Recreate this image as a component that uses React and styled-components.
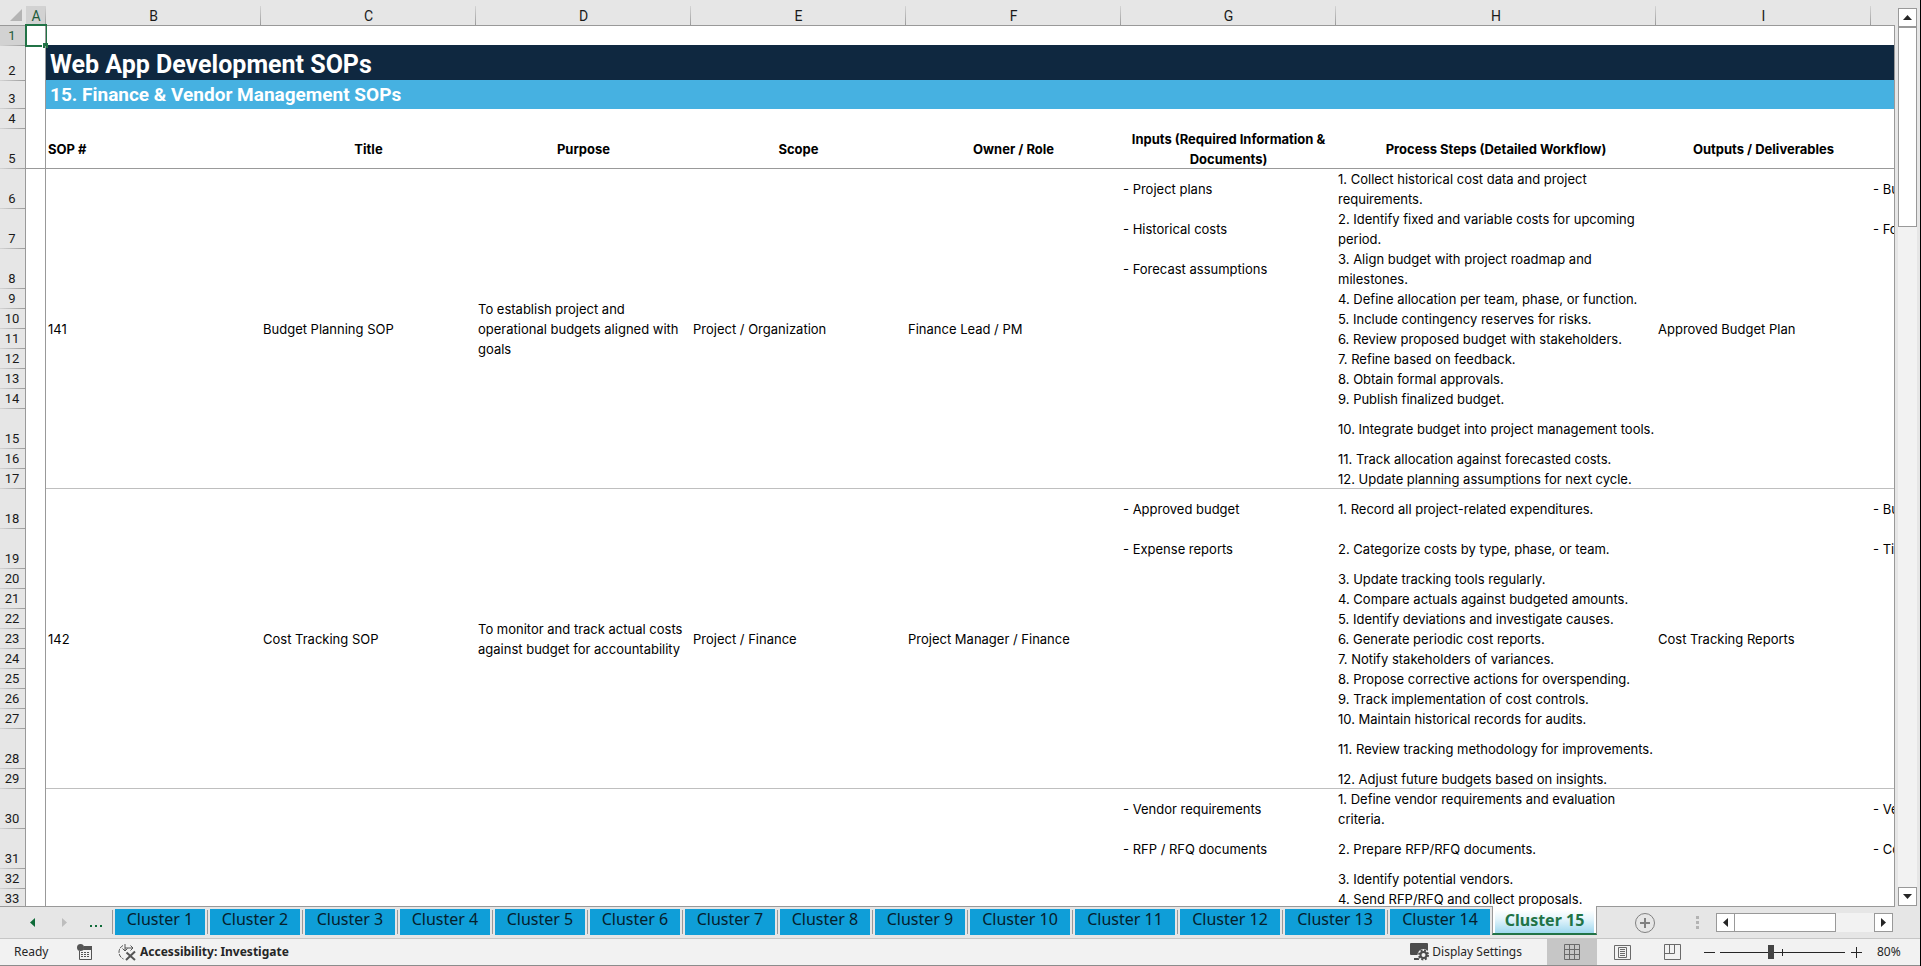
import React from "react";
import styled, { createGlobalStyle, css } from "styled-components";

const color = {
  chrome: "#e6e6e6",
  chromeActive: "#d2d2d2",
  line: "#999999",
  softLine: "#bfbfbf",
  green: "#217346",
  navy: "#0f2840",
  sky: "#46b1e1",
  tab: "#0f9ed8",
};

const GlobalStyle = createGlobalStyle`
  *, *::before, *::after { box-sizing: border-box; }
  body { margin: 0; }
  button { font: inherit; color: inherit; border: 0; padding: 0; background: none; cursor: pointer; }
  svg { display: block; }
`;

const Window = styled.div`
  display: flex;
  flex-direction: column;
  height: 100vh;
  overflow: hidden;
  background: ${color.chrome};
  border-right: 1px solid #000;
  font-family: "Noto Sans", sans-serif;
  color: #262626;
`;

/* ---------- worksheet ---------- */

const Workspace = styled.main`
  flex: 1;
  display: flex;
  min-height: 0;
`;

const Viewport = styled.div`
  flex: 1;
  min-width: 0;
  overflow: hidden;
  background: #fff;
  border-bottom: 1px solid ${color.line};
`;

const Sheet = styled.table`
  table-layout: fixed;
  width: 2086px;
  border-spacing: 0;
  font: 13px/20px Inter, "Liberation Sans", sans-serif;
  color: #000;

  th, td { padding: 0 2px; }
`;

const Col = styled.col`
  width: ${(p) => p.$w}px;
`;

const Corner = styled.td`
  height: 26px;
  background: ${color.chrome};
  box-shadow: inset 0 -1px ${color.line};

  svg { margin: 4px 0 0 8px; }
`;

const ColumnHead = styled.th`
  height: 26px;
  font: 14px/20px Roboto, sans-serif;
  vertical-align: bottom;
  color: ${(p) => (p.$active ? "#1e5c3a" : "#1a1a1a")};
  background:
    linear-gradient(${color.line}, ${color.line}) 0 100% / 100% 1px no-repeat,
    linear-gradient(#d4d4d4, ${color.line}) 100% 100% / 1px 20px no-repeat,
    linear-gradient(
      ${(p) => (p.$active ? color.chromeActive : color.chrome)},
      ${(p) => (p.$active ? color.chromeActive : color.chrome)}
    ) 0 100% / 100% 20px no-repeat,
    ${color.chrome};
`;

const RowHead = styled.th`
  && { padding: 0 4px 0 2px; }
  height: ${(p) => p.$h}px;
  font: 13px/20px Roboto, sans-serif;
  vertical-align: bottom;
  color: ${(p) => (p.$active ? "#1e5c3a" : "#1a1a1a")};
  background:
    linear-gradient(${color.line}, ${color.line}) 100% 0 / 1px 100% no-repeat,
    linear-gradient(90deg, #d4d4d4, ${color.line}) 0 100% / 100% 1px no-repeat,
    ${(p) => (p.$active ? color.chromeActive : color.chrome)};
`;

const lineBelow = {
  frozen: css`box-shadow: inset 0 -1px ${color.line};`,
  group: css`box-shadow: inset 0 -1px ${color.softLine};`,
};

const Gutter = styled.td`
  position: relative;
  background:
    linear-gradient(${color.line}, ${color.line}) 100% 0 / 1px 100% no-repeat;
  ${(p) => lineBelow[p.$line]}
`;

const Cell = styled.td`
  vertical-align: middle;
  white-space: pre;
  ${(p) => lineBelow[p.$line]}
`;

const FieldHead = styled.th`
  font-weight: 700;
  vertical-align: middle;
  white-space: pre;
  text-align: ${(p) => p.$align || "center"};
  ${lineBelow.frozen}
`;

const Banner = styled.td`
  && { padding: ${(p) => p.$drop || 0}px 4px 0; }
  font-family: Roboto, sans-serif;
  font-weight: 700;
  font-size: ${(p) => p.$size}px;
  line-height: 28px;
  color: #fff;
  background: ${(p) => p.$fill};
  box-shadow: 0 -1px ${(p) => p.$fill};
`;

const Selection = styled.div`
  position: absolute;
  top: -2px;
  left: -1px;
  width: 22px;
  height: 23px;
  border: 2px solid ${color.green};
  border-right-width: 1px;

  &::after {
    content: "";
    position: absolute;
    right: -2px;
    bottom: -3px;
    width: 5px;
    height: 5px;
    background: ${color.green};
    box-shadow: -1px 0 #fff;
  }
`;

/* ---------- scroll bars ---------- */

const VerticalScroll = styled.div`
  display: flex;
  flex-direction: column;
  width: 26px;
  padding: 8px 3px 1px 4px;
  background: linear-gradient(${color.line}, ${color.line}) 0 25px / 1px 100% no-repeat;
`;

const HorizontalScroll = styled.div`
  display: flex;
  width: 177px;
`;

const ScrollButton = styled.button`
  display: grid;
  place-items: center;
  flex: none;
  width: 19px;
  height: 19px;
  background: #fff;
  border: 1px solid ${color.line};
`;

const Track = styled.div`
  flex: 1;
  display: flex;
  flex-direction: ${(p) => (p.$vertical ? "column" : "row")};
  background: #f2f2f2;
`;

const Thumb = styled.div`
  flex: none;
  background: #fff;
  border: 1px solid ${color.line};
  ${(p) => (p.$vertical ? "height: 200px;" : "width: 102px; margin-left: -1px;")}
`;

/* ---------- sheet tabs ---------- */

const TabBar = styled.nav`
  flex: none;
  display: flex;
  height: 31px;
  padding: 0 27px 0 16px;
  font-size: 16px;
`;

const NavButton = styled.button`
  display: grid;
  place-items: center;
  width: 32px;
  height: 31px;
  color: ${(p) => (p.disabled ? "#bdbdbd" : "#0e6b38")};
`;

const TabList = styled.ul`
  display: flex;
  margin: 0;
  padding: 0;
  list-style: none;
`;

const TabItem = styled.li`
  display: flex;
  gap: 2px;
  padding-right: 2px;

  &::before {
    content: "";
    width: 1px;
    height: 24px;
    margin-top: 3px;
    background: ${color.line};
  }
`;

const Tab = styled.button`
  min-width: ${(p) => (p.$wide ? 100 : 90)}px;
  height: 26px;
  margin-top: 2px;
  padding-bottom: 6px;
  line-height: 20px;
  color: #06202c;
  background: ${color.tab};
`;

const ActiveItem = styled.li`
  position: relative;
  z-index: 1;
  height: 29px;
  margin-top: -1px;
  padding: 3px 1px 1px;
  background: #fff;
  border: solid ${color.line};
  border-width: 0 1px;
  border-bottom: 2px solid ${color.green};
`;

const ActiveTab = styled.button`
  width: 99px;
  height: 23px;
  margin: 0 1px;
  padding-bottom: 3px;
  line-height: 20px;
  font-weight: 700;
  color: ${color.green};
  background: linear-gradient(#fff, #e3f4fb 40%, #9fd8ef);
`;

const AddSheet = styled.button`
  display: grid;
  place-items: center;
  width: 22px;
  height: 31px;
  margin-left: 37px;
`;

const TabScroll = styled.div`
  display: flex;
  align-items: flex-start;
  gap: 17px;
  margin-left: auto;
  padding-top: 6px;
`;

const Grip = styled.div`
  display: flex;
  flex-direction: column;
  gap: 2px;
  padding-top: 3px;

  &::before, &::after, span {
    content: "";
    width: 3px;
    height: 3px;
    background: #b3b3b3;
  }
`;

/* ---------- status bar ---------- */

const StatusBar = styled.footer`
  flex: none;
  display: flex;
  align-items: stretch;
  height: 28px;
  padding: 0 18px 0 14px;
  background: #f2f2f2;
  border-top: 1px solid #c6c6c6;
  border-bottom: 1px solid #8c8c8c;
  font-size: 12px;
  line-height: 26px;
`;

const StatusGroup = styled.div`
  display: flex;
  align-items: center;
  gap: ${(p) => p.$gap || 0}px;
  margin-left: ${(p) => (p.$end ? "auto" : "0")};
`;

const Mode = styled.span`
  min-width: 39px;
`;

const StatusButton = styled.button`
  display: flex;
  align-items: center;
  gap: 3px;
  font-weight: ${(p) => (p.$strong ? 700 : 400)};
`;

const Views = styled.div`
  display: flex;
  margin: 0 1px 0 25px;
`;

const ViewButton = styled.button`
  display: grid;
  place-items: center;
  width: 50px;
  background: ${(p) => (p.$on ? "#c6c6c6" : "transparent")};
`;

const ZoomButton = styled.button`
  display: grid;
  place-items: center;
  width: 22px;
  height: 26px;
`;

const ZoomSlider = styled.input`
  appearance: none;
  width: 125px;
  height: 16px;
  margin: 0;
  background:
    linear-gradient(#262626, #262626) 50% 50% / 1px 7px no-repeat,
    linear-gradient(#262626, #262626) 0 50% / 100% 1px no-repeat;

  &::-webkit-slider-thumb {
    appearance: none;
    width: 6px;
    height: 14px;
    background: #444;
  }
`;

const ZoomValue = styled.output`
  width: 25px;
  margin-left: 10px;
  white-space: nowrap;
`;

/* ---------- icons ---------- */

const arrows = {
  up: [9, 5, "M4.5 0L9 5H0z"],
  down: [9, 5, "M0 0h9L4.5 5z"],
  left: [5, 9, "M5 0v9L0 4.5z"],
  right: [5, 9, "M0 0v9l5-4.5z"],
};

const Arrow = ({ dir }) => {
  const [w, h, d] = arrows[dir];
  return (
    <svg width={w} height={h} viewBox={`0 0 ${w} ${h}`}>
      <path d={d} fill="currentColor" />
    </svg>
  );
};

const MacroIcon = () => (
  <svg width="16" height="16" viewBox="0 0 16 16">
    <path d="M2.5 7v8.5h12V2.5H8" fill="none" stroke="#555" />
    <path d="M7 2h8v4H6z" fill="#555" />
    <circle cx="3.5" cy="3.5" r="3.5" fill="#555" />
    <path d="M4 8.5h9M4 10.5h9M4 12.5h9" stroke="#555" strokeDasharray="2 1" />
  </svg>
);

const AccessibilityIcon = () => (
  <svg width="20" height="18" viewBox="0 0 20 18" fill="none" stroke="#555">
    <path d="M6 2.5A7.5 7.5 0 0 0 6.5 16" strokeDasharray="4 1" />
    <path d="M8 1v6.5M5.500 5.500L8 8l2.500-2.500M8 5h8M13.500 2.500L16 5l-2.500 2.500" />
    <path d="M9.500 9.500l8.500 7.500M18 8.500l-9 8.500" strokeWidth="2" />
  </svg>
);

const DisplayIcon = () => (
  <svg width="19" height="18" viewBox="0 0 19 18">
    <path d="M1 0h16a1 1 0 0 1 1 1v11H1a1 1 0 0 1-1-1V1a1 1 0 0 1 1-1zM4 15h5v2H4z" fill="#4d4d4d" />
    <circle cx="13.500" cy="12" r="6" fill="#f2f2f2" />
    <circle cx="13.500" cy="12" r="3" fill="none" stroke="#4d4d4d" strokeWidth="2" />
    <circle cx="13.500" cy="12" r="4.500" fill="none" stroke="#4d4d4d" strokeWidth="2" strokeDasharray="2 1.534" />
  </svg>
);

const GridIcon = () => (
  <svg width="16" height="16" viewBox="0 0 16 16" fill="none" stroke="#6a6a6a">
    <path d="M.5.5h15v15H.5zM5.500.5v15M10.500.5v15M.5 5.500h15M.5 10.500h15" />
  </svg>
);

const PageIcon = () => (
  <svg width="17" height="15" viewBox="0 0 17 15" fill="none" stroke="#6a6a6a">
    <path d="M.5.5h16v14H.5zM4.500 2.500h8v10h-8zM6 4.500h5M6 6.500h5M6 8.500h5M6 10.500h5" />
  </svg>
);

const BreakIcon = () => (
  <svg width="17" height="16" viewBox="0 0 17 16" fill="none" stroke="#6a6a6a">
    <path d="M.5.5h16v15H.5zM.5 9.500h10v-9M5.500.5v9" />
  </svg>
);

const PlusCircle = () => (
  <svg width="20" height="20" viewBox="0 0 20 20" fill="none" stroke="#808080">
    <circle cx="10" cy="10" r="9.500" />
    <path d="M5 10h10M10 5v10" strokeWidth="2" />
  </svg>
);

/* ---------- data ---------- */

const columns = [
  ["A", 20], ["B", 215], ["C", 215], ["D", 215], ["E", 215],
  ["F", 215], ["G", 215], ["H", 320], ["I", 215], ["", 215],
];

const fields = [
  "Title",
  "Purpose",
  "Scope",
  "Owner / Role",
  "Inputs (Required Information &\nDocuments)",
  "Process Steps (Detailed Workflow)",
  "Outputs / Deliverables",
  "",
];

const sops = [
  {
    first: 6,
    lead: ["141", "Budget Planning SOP", "To establish project and\noperational budgets aligned with\ngoals", "Project / Organization", "Finance Lead / PM"],
    output: "Approved Budget Plan",
    rows: [
      [40, "1. Collect historical cost data and project\nrequirements.", "- Project plans", "- Budget"],
      [40, "2. Identify fixed and variable costs for upcoming\nperiod.", "- Historical costs", "- Forecast"],
      [40, "3. Align budget with project roadmap and\nmilestones.", "- Forecast assumptions"],
      [20, "4. Define allocation per team, phase, or function."],
      [20, "5. Include contingency reserves for risks."],
      [20, "6. Review proposed budget with stakeholders."],
      [20, "7. Refine based on feedback."],
      [20, "8. Obtain formal approvals."],
      [20, "9. Publish finalized budget."],
      [40, "10. Integrate budget into project management tools."],
      [20, "11. Track allocation against forecasted costs."],
      [20, "12. Update planning assumptions for next cycle."],
    ],
  },
  {
    first: 18,
    lead: ["142", "Cost Tracking SOP", "To monitor and track actual costs\nagainst budget for accountability", "Project / Finance", "Project Manager / Finance"],
    output: "Cost Tracking Reports",
    rows: [
      [40, "1. Record all project-related expenditures.", "- Approved budget", "- Budget"],
      [40, "2. Categorize costs by type, phase, or team.", "- Expense reports", "- Time"],
      [20, "3. Update tracking tools regularly."],
      [20, "4. Compare actuals against budgeted amounts."],
      [20, "5. Identify deviations and investigate causes."],
      [20, "6. Generate periodic cost reports."],
      [20, "7. Notify stakeholders of variances."],
      [20, "8. Propose corrective actions for overspending."],
      [20, "9. Track implementation of cost controls."],
      [20, "10. Maintain historical records for audits."],
      [40, "11. Review tracking methodology for improvements."],
      [20, "12. Adjust future budgets based on insights."],
    ],
  },
  {
    first: 30,
    lead: ["", "", "", "", ""],
    output: "",
    rows: [
      [40, "1. Define vendor requirements and evaluation\ncriteria.", "- Vendor requirements", "- Vendor"],
      [40, "2. Prepare RFP/RFQ documents.", "- RFP / RFQ documents", "- Contract"],
      [20, "3. Identify potential vendors."],
      [20, "4. Send RFP/RFQ and collect proposals."],
    ],
  },
];

const tabs = Array.from({ length: 14 }, (_, i) => i + 1);

const SopRows = ({ sop }) =>
  sop.rows.map(([height, step, input, extra], i) => {
    const line = i === sop.rows.length - 1 ? "group" : undefined;
    const span = sop.rows.length;
    return (
      <tr key={step}>
        <RowHead scope="row" $h={height}>{sop.first + i}</RowHead>
        <Gutter />
        {i === 0 && sop.lead.map((text, n) => (
          <Cell key={n} rowSpan={span} $line="group">{text}</Cell>
        ))}
        <Cell $line={line}>{input}</Cell>
        <Cell $line={line}>{step}</Cell>
        {i === 0 && <Cell rowSpan={span} $line="group">{sop.output}</Cell>}
        <Cell $line={line}>{extra}</Cell>
      </tr>
    );
  });

const Worksheet = () => (
  <Sheet>
    <colgroup>
      <Col $w={26} />
      {columns.map(([name, w]) => <Col key={name} $w={w} />)}
    </colgroup>
    <thead>
      <tr>
        <Corner>
          <svg width="12" height="12" viewBox="0 0 12 12"><path d="M12 0v12H0z" fill="#b4b4b4" /></svg>
        </Corner>
        {columns.map(([name]) => (
          <ColumnHead key={name} scope="col" $active={name === "A"}>{name}</ColumnHead>
        ))}
      </tr>
    </thead>
    <tbody>
      <tr>
        <RowHead scope="row" $h={20} $active>1</RowHead>
        <Gutter><Selection /></Gutter>
        <Cell colSpan={9} />
      </tr>
      <tr>
        <RowHead scope="row" $h={35}>2</RowHead>
        <Gutter />
        <Banner colSpan={9} $size={25} $drop={2} $fill={color.navy}>Web App Development SOPs</Banner>
      </tr>
      <tr>
        <RowHead scope="row" $h={28}>3</RowHead>
        <Gutter />
        <Banner colSpan={9} $size={19} $fill={color.sky}>15. Finance &amp; Vendor Management SOPs</Banner>
      </tr>
      <tr>
        <RowHead scope="row" $h={20}>4</RowHead>
        <Gutter />
        <Cell colSpan={9} />
      </tr>
      <tr>
        <RowHead scope="row" $h={40}>5</RowHead>
        <Gutter $line="frozen" />
        <FieldHead scope="col" $align="left">SOP #</FieldHead>
        {fields.map((name) => <FieldHead key={name} scope="col">{name}</FieldHead>)}
      </tr>
      {sops.map((sop) => <SopRows key={sop.first} sop={sop} />)}
    </tbody>
  </Sheet>
);

export default function App() {
  const [zoom, setZoom] = React.useState(80);
  return (
    <Window>
      <GlobalStyle />
      <Workspace>
        <Viewport><Worksheet /></Viewport>
        <VerticalScroll>
          <ScrollButton aria-label="Scroll up"><Arrow dir="up" /></ScrollButton>
          <Track $vertical><Thumb $vertical /></Track>
          <ScrollButton aria-label="Scroll down"><Arrow dir="down" /></ScrollButton>
        </VerticalScroll>
      </Workspace>

      <TabBar aria-label="Sheets">
        <NavButton aria-label="Previous sheets"><Arrow dir="left" /></NavButton>
        <NavButton aria-label="Next sheets" disabled><Arrow dir="right" /></NavButton>
        <NavButton aria-label="More sheets">
          <svg width="12" height="8" viewBox="0 0 12 8"><path d="M0 6h2v2H0zM5 6h2v2H5zM10 6h2v2h-2z" fill="currentColor" /></svg>
        </NavButton>
        <TabList>
          {tabs.map((n) => (
            <TabItem key={n}><Tab $wide={n > 9}>Cluster {n}</Tab></TabItem>
          ))}
          <ActiveItem><ActiveTab aria-current="page">Cluster 15</ActiveTab></ActiveItem>
        </TabList>
        <AddSheet aria-label="New sheet"><PlusCircle /></AddSheet>
        <TabScroll>
          <Grip><span /></Grip>
          <HorizontalScroll>
            <ScrollButton aria-label="Scroll left"><Arrow dir="left" /></ScrollButton>
            <Track><Thumb /></Track>
            <ScrollButton aria-label="Scroll right"><Arrow dir="right" /></ScrollButton>
          </HorizontalScroll>
        </TabScroll>
      </TabBar>

      <StatusBar>
        <StatusGroup $gap={24}>
          <Mode>Ready</Mode>
          <StatusButton aria-label="Record macro"><MacroIcon /></StatusButton>
          <StatusButton $strong><AccessibilityIcon />Accessibility: Investigate</StatusButton>
        </StatusGroup>
        <StatusGroup $end>
          <StatusButton><DisplayIcon />Display Settings</StatusButton>
        </StatusGroup>
        <Views>
          <ViewButton aria-label="Normal" $on><GridIcon /></ViewButton>
          <ViewButton aria-label="Page layout"><PageIcon /></ViewButton>
          <ViewButton aria-label="Page break preview"><BreakIcon /></ViewButton>
        </Views>
        <StatusGroup>
          <ZoomButton aria-label="Zoom out" onClick={() => setZoom(Math.max(0, zoom - 10))}>
            <svg width="11" height="11" viewBox="0 0 11 11"><path d="M0 5.500h11" stroke="#262626" /></svg>
          </ZoomButton>
          <ZoomSlider
            type="range" aria-label="Zoom" min="0" max="200"
            value={zoom} onChange={(e) => setZoom(Number(e.target.value))}
          />
          <ZoomButton aria-label="Zoom in" onClick={() => setZoom(Math.min(200, zoom + 10))}>
            <svg width="11" height="11" viewBox="0 0 11 11"><path d="M0 5.500h11M5.500 0v11" stroke="#262626" /></svg>
          </ZoomButton>
          <ZoomValue>{zoom}%</ZoomValue>
        </StatusGroup>
      </StatusBar>
    </Window>
  );
}
